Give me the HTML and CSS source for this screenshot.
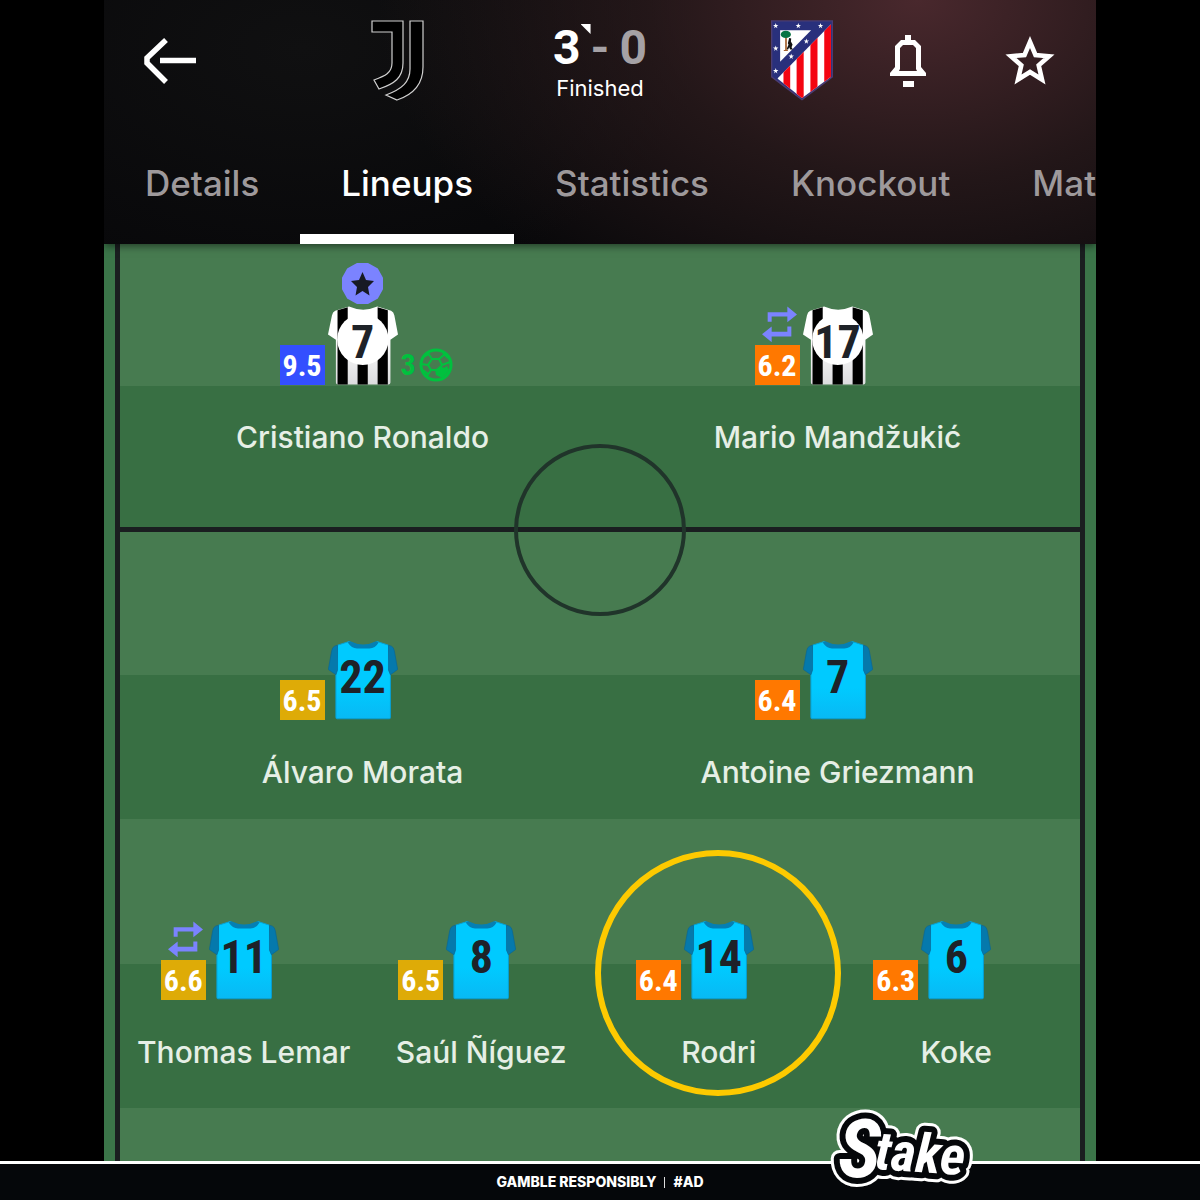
FILE: index.html
```html
<!DOCTYPE html>
<html lang="en">
<head>
<meta charset="utf-8">
<meta name="viewport" content="width=device-width, initial-scale=1">
<title>Lineups</title>
<link rel="stylesheet" href="styles.css">
</head>
<body>
<svg class="sprites" aria-hidden="true">
  <defs>
    <linearGradient id="shade-white" x1="0" y1="0" x2="0" y2="1"><stop offset=".4" stop-color="#fff"/><stop offset="1" stop-color="#dcdcde"/></linearGradient>
    <linearGradient id="shade-blue" x1="0" y1="0" x2="0" y2="1"><stop offset=".6" stop-color="#00caff"/><stop offset="1" stop-color="#08b9f4"/></linearGradient>
  </defs>
  <symbol id="kit-home" viewBox="0 0 213 240">
    <path d="M64 3Q107 22 150 3L192 16Q200 20 202 30L213 88L190 104V234Q190 240 184 240H30Q24 240 24 234V104L0 88L12 30Q14 20 22 16Z" fill="url(#shade-white)"/>
    <path d="M29 14L60 5V240H29ZM151 5L182 14V240H151ZM90 140H121V240H90Z" fill="#000"/>
    <circle cx="106" cy="103" r="78" fill="#fff"/>
  </symbol>
  <symbol id="kit-away" viewBox="0 0 213 240">
    <path d="M29 14L64 3Q107 30 150 3L184 14L190 104V234Q190 238 186 238H28Q24 238 24 234V104Z" fill="url(#shade-blue)" stroke="#07a0d2" stroke-width="3"/>
    <path d="M29 14L20 17Q13 20 11 32L1 88L24 104L29 90ZM184 14L193 17Q200 20 202 32L212 88L190 104L184 90Z" fill="#0579ac" stroke="#0a6794" stroke-width="2"/>
    <path d="M60 6L68 2Q107 22 146 2L154 6Q144 24 126 24H88Q72 24 60 6Z" fill="#057fb3"/>
  </symbol>
  <symbol id="swap" viewBox="0 0 105 105">
    <path d="M17 46V17H76V0L105 24L76 47V30H29V46ZM88 60V90H29V107L0 83L29 60V76H76V60Z" fill="#7b83ff"/>
  </symbol>
  <symbol id="ball" viewBox="0 0 34 34">
    <circle cx="17" cy="17" r="15" fill="none" stroke="#00c13e" stroke-width="3"/>
    <path d="M13 11H20L23 17L19 22H12L9 17ZM13 11L9 5M20 11L26 6M23 17L31 14M19 22L21 27M12 22L8 28M9 17L2 16M4 9L10 6M24 5L29 10M4 22L9 26" fill="none" stroke="#00c13e" stroke-width="2"/>
    <path d="M21 18L25 20L28 18L30 22L27 26L23 30L17 27L16 22Z" fill="#00c13e"/>
  </symbol>
</svg>

<div class="app">
  <header class="header">
    <div class="topbar">
      <button class="icon-button" type="button" aria-label="Back">
        <svg width="52" height="46" viewBox="0 0 52 46" fill="none" stroke="#fff"><path d="M22 2L3 20V25L22 44M16 22.500H52" stroke-width="5.500"/></svg>
      </button>
      <div class="match">
        <svg class="club" viewBox="0 0 62 81" role="img" aria-label="Juventus" fill="#000" stroke="#d0d0d0" stroke-width="1.200">
          <path d="M5 1H36V43C36 58 27 64 12 69L7 60C18 56 25 53 25 43V12H5Z"/>
          <path d="M43 1H56V47C56 63 48 74 30 80L19 75C35 69 43 62 43 49Z"/>
        </svg>
        <div class="result">
          <div class="score"><span>3</span><i class="corner"></i><span class="dim">-</span><span class="dim">0</span></div>
          <div class="status">Finished</div>
        </div>
        <svg class="club" viewBox="0 0 184 239" role="img" aria-label="Atletico Madrid">
          <clipPath id="field"><path d="M178 12V168L92 231L19 173Z"/></clipPath>
          <path d="M2 2H182V168L92 236L2 168Z" fill="#29307c" stroke="#4b3c73" stroke-width="4"/>
          <g clip-path="url(#field)"><path d="M0 0H184V240H0Z" fill="#fff"/><path d="M37 0H57V240H37ZM76 0H97V240H76ZM117 0H138V240H117ZM158 0H184V240H158Z" fill="#f40511"/></g>
          <path d="M27 30H119L27 123Z" fill="#fff"/>
          <path d="M42 50H47V88H50V91H38V88H42Z" fill="#a3602e"/><ellipse cx="44" cy="42" rx="15" ry="11" fill="#087443"/>
          <path d="M54 53L60 54L59 63L64 72L61 80L65 87H57L54 80L50 88L47 84L52 73L50 68Z" fill="#111"/>
          <g fill="#fff">
            <path id="pip" d="M14 8L16 14L22 14L17 18L19 24L14 20L9 24L11 18L6 14L12 14Z"/>
            <use href="#pip" x="67"/><use href="#pip" x="133"/><use href="#pip" y="67"/><use href="#pip" y="134"/><use href="#pip" x="91" y="46"/><use href="#pip" x="46" y="91"/>
          </g>
        </svg>
      </div>
      <div class="actions">
        <button class="icon-button" type="button" aria-label="Notifications">
          <svg width="38" height="52" viewBox="0 0 38 52"><path d="M16 0H22V5H26L32 11V32L37 38V41H1V38L6 32V11L12 5H16ZM14 10L11 13V34L10 36H28L27 34V13L24 10ZM14 46H25V52H14Z" fill="#fff" fill-rule="evenodd"/></svg>
        </button>
        <button class="icon-button" type="button" aria-label="Add to favourites">
          <svg width="52" height="50" viewBox="0 0 52 50"><path d="M26 6L31.500 19L45 20.200L34.700 29.300L38 43.500L26 36L14 43.500L17.300 29.300L7 20.200L20.500 19Z" fill="none" stroke="#fff" stroke-width="4.600"/></svg>
        </button>
      </div>
    </div>
    <nav class="tabs">
      <a class="tab" href="#details">Details</a>
      <a class="tab active" href="#lineups" aria-current="page">Lineups</a>
      <a class="tab" href="#statistics">Statistics</a>
      <a class="tab" href="#knockout">Knockout</a>
      <a class="tab" href="#matches">Matches</a>
    </nav>
  </header>

  <main class="field">
    <section class="half home">
      <div class="row">
        <article class="player">
          <div class="marks"><span class="rating best">9.5</span></div>
          <div class="shirt"><svg><use href="#kit-home"/></svg><span>7</span>
            <svg class="motm" viewBox="0 0 41 41"><path d="M15 1H26L35 6L40 15V26L35 35L26 40H15L6 35L1 26V15L6 6Z" fill="#7b83ff" stroke="#7b83ff" stroke-width="2" stroke-linejoin="round"/><path d="M20.500 9L24 17L32 18L26 24L27.500 32.500L20.500 28L13.500 32.500L15 24L9 18L17 17Z" fill="#171a24"/></svg>
          </div>
          <div class="goals"><span>3</span><svg><use href="#ball"/></svg></div>
          <h2 class="name">Cristiano Ronaldo</h2>
        </article>
        <article class="player">
          <div class="marks"><svg class="swap"><use href="#swap"/></svg><span class="rating low">6.2</span></div>
          <div class="shirt"><svg><use href="#kit-home"/></svg><span>17</span></div>
          <h2 class="name">Mario Mandžukić</h2>
        </article>
      </div>
    </section>
    <section class="half away">
      <div class="circle"></div>
      <div class="row">
        <article class="player">
          <div class="marks"><span class="rating mid">6.5</span></div>
          <div class="shirt"><svg><use href="#kit-away"/></svg><span>22</span></div>
          <h2 class="name">Álvaro Morata</h2>
        </article>
        <article class="player">
          <div class="marks"><span class="rating low">6.4</span></div>
          <div class="shirt"><svg><use href="#kit-away"/></svg><span>7</span></div>
          <h2 class="name">Antoine Griezmann</h2>
        </article>
      </div>
      <div class="row">
        <article class="player">
          <div class="marks"><svg class="swap"><use href="#swap"/></svg><span class="rating mid">6.6</span></div>
          <div class="shirt"><svg><use href="#kit-away"/></svg><span>11</span></div>
          <h2 class="name">Thomas Lemar</h2>
        </article>
        <article class="player">
          <div class="marks"><span class="rating mid">6.5</span></div>
          <div class="shirt"><svg><use href="#kit-away"/></svg><span>8</span></div>
          <h2 class="name">Saúl Ñíguez</h2>
        </article>
        <article class="player highlighted">
          <div class="marks"><span class="rating low">6.4</span></div>
          <div class="shirt"><svg><use href="#kit-away"/></svg><span>14</span></div>
          <h2 class="name">Rodri</h2>
        </article>
        <article class="player">
          <div class="marks"><span class="rating low">6.3</span></div>
          <div class="shirt"><svg><use href="#kit-away"/></svg><span>6</span></div>
          <h2 class="name">Koke</h2>
        </article>
      </div>
    </section>
  </main>
</div>

<footer class="footer">
  <span>GAMBLE RESPONSIBLY</span><i class="bar"></i><span>#AD</span>
  <svg class="sponsor" viewBox="0 0 144 80" role="img" aria-label="Stake">
    <g class="wordmark edge"><text x="8" y="68" class="initial">S</text><text x="44" y="60" transform="rotate(4 44 60)">take</text></g>
    <g class="wordmark rim"><text x="8" y="68" class="initial">S</text><text x="44" y="60" transform="rotate(4 44 60)">take</text></g>
    <g class="wordmark"><text x="8" y="68" class="initial">S</text><text x="44" y="60" transform="rotate(4 44 60)">take</text></g>
  </svg>
</footer>
</body>
</html>
```
FILE: styles.css
```css
*, *::before, *::after { box-sizing: border-box; }

body {
  margin: 0;
  background: #000;
  color: #fff;
  font-family: Inter, "Liberation Sans", sans-serif;
}

.sprites { display: block; width: 0; height: 0; }

.app { margin: 0 104px; }

.header {
  position: relative;
  z-index: 1;
  height: 244px;
  display: flex;
  flex-direction: column;
  justify-content: space-between;
  background:
    radial-gradient(540px 360px at 82% 0, #49282d 0%, #35202299 50%, transparent 100%),
    radial-gradient(400px 240px at 20% 20%, #101011, #08080a);
  box-shadow: 0 2px 8px #0008;
}

.topbar {
  display: grid;
  grid-template-columns: 1fr auto 1fr;
  align-items: center;
  padding: 20px 40px 0;
}

.icon-button {
  display: block;
  padding: 0;
  border: 0;
  background: none;
}
.icon-button svg { display: block; }

.match { display: flex; gap: 111px; }
.club { width: 62px; height: 81px; }

.result {
  width: 120px;
  text-align: center;
}
.score {
  display: flex;
  justify-content: center;
  gap: 10px;
  font-family: Roboto, "Liberation Sans", sans-serif;
  font-size: 48px;
  line-height: 56px;
  font-weight: 700;
}
.dim { color: #a5a1a5; }
.corner {
  width: 10px;
  height: 10px;
  margin: 4px -10px 0;
  background: #fff;
  clip-path: polygon(0 0, 100% 0, 100% 100%);
}
.status { font-size: 22px; line-height: 24px; }

.actions {
  display: flex;
  justify-content: flex-end;
  align-items: center;
  gap: 77px;
}

.tabs {
  display: flex;
  overflow: hidden;
}
.tab {
  flex: none;
  padding: 0 41px 28px;
  border-bottom: 10px solid transparent;
  color: #9e999b;
  font-size: 35px;
  line-height: 46px;
  font-weight: 500;
  text-decoration: none;
}
.tab.active { color: #fff; border-color: #fff; }

.field {
  padding: 0 11px;
  background: #3b7549;
}

.half {
  position: relative;
  padding: 0 5px;
  border: solid #1a1e20;
  border-width: 0 5px;
}
.home {
  padding-top: 61px;
  padding-bottom: 72px;
  border-bottom-width: 3px;
  background: linear-gradient(#477b50 142px, #386f43 142px);
}
.away {
  padding-top: 108px;
  padding-bottom: 91px;
  border-top-width: 2px;
  background: repeating-linear-gradient(#477b50 0 143px, #386f43 143px 287px, #477b50 287px 289px);
}
.circle {
  position: absolute;
  top: -88px;
  left: 50%;
  width: 172px;
  height: 172px;
  margin-left: -86px;
  border: 4px solid #20342a;
  border-radius: 50%;
}

.row {
  display: grid;
  grid-auto-columns: minmax(0, 1fr);
  grid-auto-flow: column;
}
.row + .row { margin-top: 130px; }

.player {
  position: relative;
  display: grid;
  grid-template-columns: 1fr 70px 1fr;
  grid-template-rows: 80px 36px;
  column-gap: 3px;
  row-gap: 34px;
}
.highlighted::after {
  content: "";
  position: absolute;
  top: -70px;
  left: 50%;
  width: 246px;
  height: 246px;
  margin-left: -124px;
  border: 6px solid #fdca00;
  border-radius: 50%;
}

.marks {
  display: flex;
  flex-direction: column;
  align-items: flex-end;
  justify-content: flex-end;
  gap: 3px;
}
.swap { width: 35px; height: 36px; margin-right: 3px; }
.rating {
  width: 45px;
  height: 40px;
  font: 700 30px/41px "Roboto Condensed", "Liberation Sans", sans-serif;
  text-align: center;
}
.best { background: #334fff; }
.mid { background: #deab07; }
.low { background: #ff7800; }

.shirt {
  position: relative;
  display: grid;
  place-items: center;
}
.shirt > * { grid-area: 1 / 1; }
.shirt > svg { width: 70px; height: 80px; }
.shirt > span {
  color: #1e2228;
  font: 700 46px/48px "Roboto Condensed", "Liberation Sans", sans-serif;
  padding-bottom: 6px;
}
.shirt > .motm {
  position: absolute;
  top: -42px;
  left: 14px;
  width: 41px;
  height: 41px;
}

.goals {
  display: flex;
  align-items: center;
  align-self: end;
  height: 40px;
  gap: 3px;
  color: #00c13e;
  font: 700 30px/40px "Roboto Condensed", "Liberation Sans", sans-serif;
}
.goals svg { width: 34px; height: 34px; }

.name {
  grid-column: 1 / -1;
  grid-row: 2;
  margin: 0;
  color: #e6efe6;
  font-size: 30px;
  line-height: 36px;
  font-weight: 500;
  text-align: center;
  white-space: nowrap;
}

.footer {
  position: relative;
  z-index: 2;
  display: flex;
  align-items: center;
  justify-content: center;
  gap: 8px;
  height: 39px;
  border-top: 3px solid #fff;
  background: #05070a;
  font-size: 14px;
  line-height: 16px;
  font-weight: 800;
}
.bar { width: 1px; height: 11px; background: #ddd; }

.sponsor {
  position: absolute;
  right: 226px;
  bottom: 11px;
  width: 144px;
  height: 80px;
  overflow: visible;
}
.wordmark {
  font: italic 700 54px "Roboto Condensed", Lato, sans-serif;
  fill: #fff;
  stroke-linejoin: round;
}
.initial { font-size: 82px; }
.edge { stroke: #fff; stroke-width: 18px; }
.rim { fill: #05070a; stroke: #05070a; stroke-width: 12px; }
```
